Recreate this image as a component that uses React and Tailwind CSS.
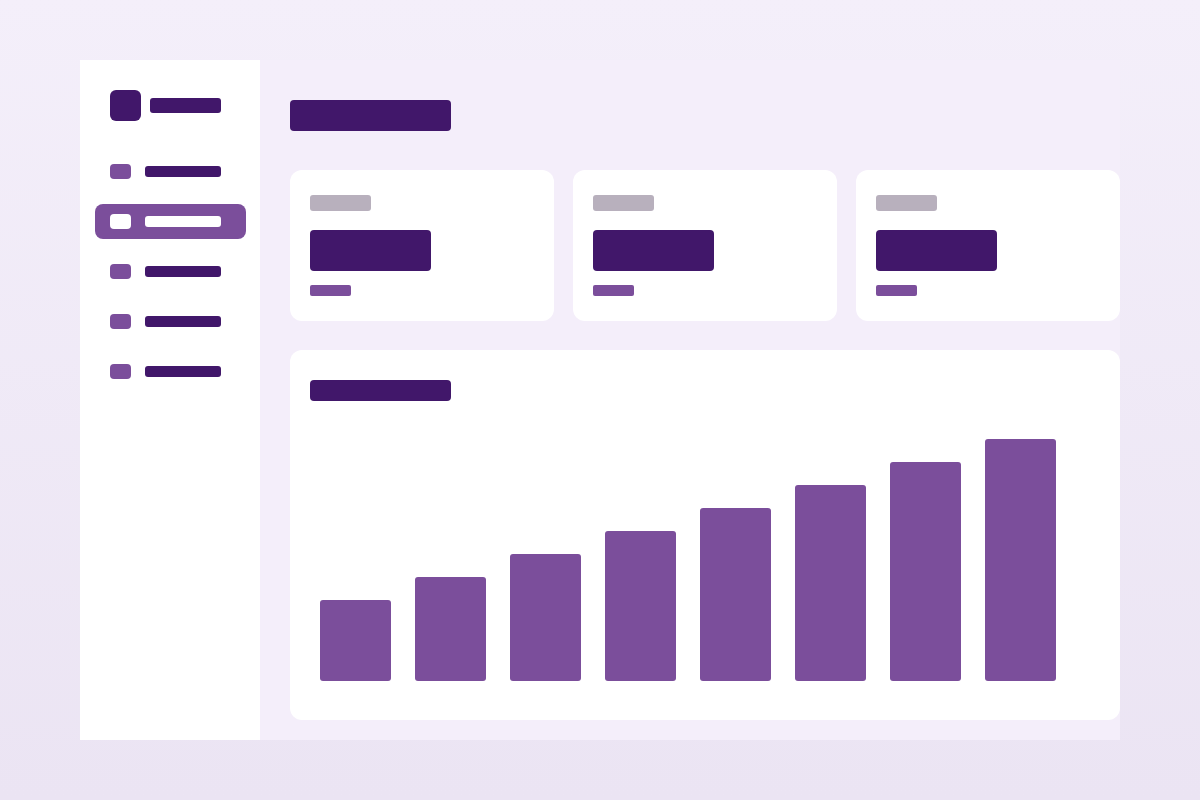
const bars = [81, 104, 127, 150, 173, 196, 219, 242];

function NavItem({ active }) {
  return (
    <div
      className={`flex h-[35px] w-[151px] items-center gap-[14px] rounded-[8px] px-[15px] ${
        active ? 'bg-[#7b4e9b]' : ''
      }`}
    >
      <div className={`h-[15px] w-[21px] rounded-[4px] ${active ? 'bg-white' : 'bg-[#7b4e9b]'}`} />
      <div className={`h-[11px] w-[76px] rounded-[3px] ${active ? 'bg-white' : 'bg-[#41176a]'}`} />
    </div>
  );
}

function StatCard() {
  return (
    <div className="h-[151px] rounded-[12px] bg-white px-[20px] pt-[25px]">
      <div className="h-[16px] w-[61px] rounded-[3px] bg-[#b8b0bd]" />
      <div className="mt-[19px] h-[41px] w-[121px] rounded-[4px] bg-[#41176a]" />
      <div className="mt-[14px] h-[11px] w-[41px] rounded-[2px] bg-[#7b4e9b]" />
    </div>
  );
}

export default function App() {
  return (
    <div className="flex h-[800px] w-[1200px] items-start bg-gradient-to-b from-[#f4effa] to-[#ebe4f3] pl-[80px] pt-[60px]">
      <div className="flex h-[680px] w-[1040px]">
        <aside className="w-[180px] bg-white pl-[15px] pt-[30px]">
          <div className="flex items-center gap-[9px] pl-[15px]">
            <div className="h-[31px] w-[31px] rounded-[6px] bg-[#41176a]" />
            <div className="h-[15px] w-[71px] rounded-[3px] bg-[#41176a]" />
          </div>
          <nav className="mt-[33px] flex flex-col gap-[15px]">
            <NavItem />
            <NavItem active />
            <NavItem />
            <NavItem />
            <NavItem />
          </nav>
        </aside>
        <main className="flex-1 bg-[#f4eefa] pl-[30px] pt-[40px]">
          <div className="h-[31px] w-[161px] rounded-[4px] bg-[#41176a]" />
          <div className="mt-[39px] grid grid-cols-3 gap-[19px]">
            <StatCard />
            <StatCard />
            <StatCard />
          </div>
          <section className="mt-[29px] h-[370px] rounded-[12px] bg-white px-[20px] pt-[30px]">
            <div className="h-[21px] w-[141px] rounded-[4px] bg-[#41176a]" />
            <div className="mt-[38px] flex h-[242px] items-end gap-[24px] pl-[10px]">
              {bars.map((h, i) => (
                <div key={i} className="w-[71px] rounded-[3px] bg-[#7b4e9b]" style={{ height: h }} />
              ))}
            </div>
          </section>
        </main>
      </div>
    </div>
  );
}
